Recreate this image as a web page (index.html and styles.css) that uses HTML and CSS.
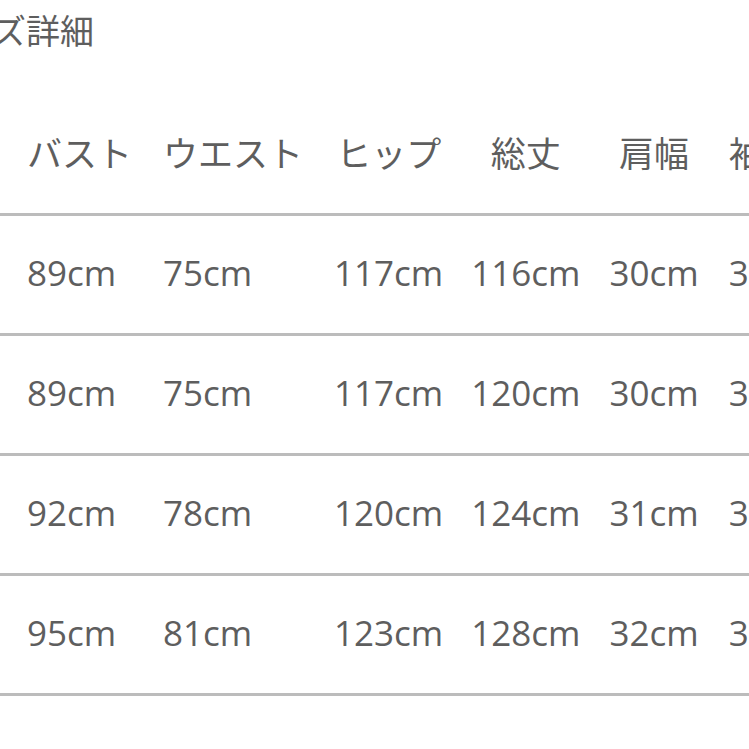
FILE: index.html
```html
<!DOCTYPE html>
<html lang="ja">
<head>
<meta charset="utf-8">
<link rel="stylesheet" href="styles.css">
</head>
<body>
<div class="page">
  <h2 class="title">サイズ詳細</h2>
  <table class="size-table">
    <thead>
      <tr>
        <th>バスト</th><th>ウエスト</th><th>ヒップ</th><th>総丈</th><th>肩幅</th><th>袖ぐり</th>
      </tr>
    </thead>
    <tbody>
      <tr><td>89cm</td><td>75cm</td><td>117cm</td><td>116cm</td><td>30cm</td><td>36cm</td></tr>
      <tr><td>89cm</td><td>75cm</td><td>117cm</td><td>120cm</td><td>30cm</td><td>36cm</td></tr>
      <tr><td>92cm</td><td>78cm</td><td>120cm</td><td>124cm</td><td>31cm</td><td>37cm</td></tr>
      <tr><td>95cm</td><td>81cm</td><td>123cm</td><td>128cm</td><td>32cm</td><td>38cm</td></tr>
    </tbody>
  </table>
</div>
</body>
</html>
```
FILE: styles.css
```css
html, body {
  margin: 0;
  padding: 0;
  background: #ffffff;
}
body {
  width: 749px;
  height: 749px;
  overflow: hidden;
  font-family: "Open Sans", "Noto Sans CJK JP", sans-serif;
  color: #5e5e5e;
}
.page {
  width: 1100px;
}
.title {
  margin: 0 0 0 -75px;
  padding-top: 9px;
  height: 96px;
  box-sizing: border-box;
  font-size: 34px;
  font-weight: 400;
  line-height: 42px;
  font-family: "Noto Sans CJK JP", sans-serif;
  color: #5e5e5e;
}
.size-table {
  border-collapse: collapse;
  margin-left: 0;
  white-space: nowrap;
}
.size-table th,
.size-table td {
  padding: 0 15.5px;
  vertical-align: middle;
  line-height: 40px;
}
.size-table th {
  font-family: "Noto Sans CJK JP", sans-serif;
  font-weight: 400;
  font-size: 35px;
  text-align: center;
  height: 111px;
  padding-bottom: 6px;
}
.size-table td {
  font-size: 35px;
  text-align: left;
  height: 113px;
  padding-bottom: 4px;
}
.size-table th:first-child,
.size-table td:first-child {
  padding-left: 27px;
}
.size-table th:nth-child(4),
.size-table td:nth-child(4) {
  padding-left: 12.5px;
}
.size-table th:nth-child(5),
.size-table td:nth-child(5) {
  padding-left: 13.5px;
}
.size-table th:nth-child(6),
.size-table td:nth-child(6) {
  padding-left: 14.5px;
}
.size-table tr {
  border-bottom: 3px solid #bcbcbc;
}
```
